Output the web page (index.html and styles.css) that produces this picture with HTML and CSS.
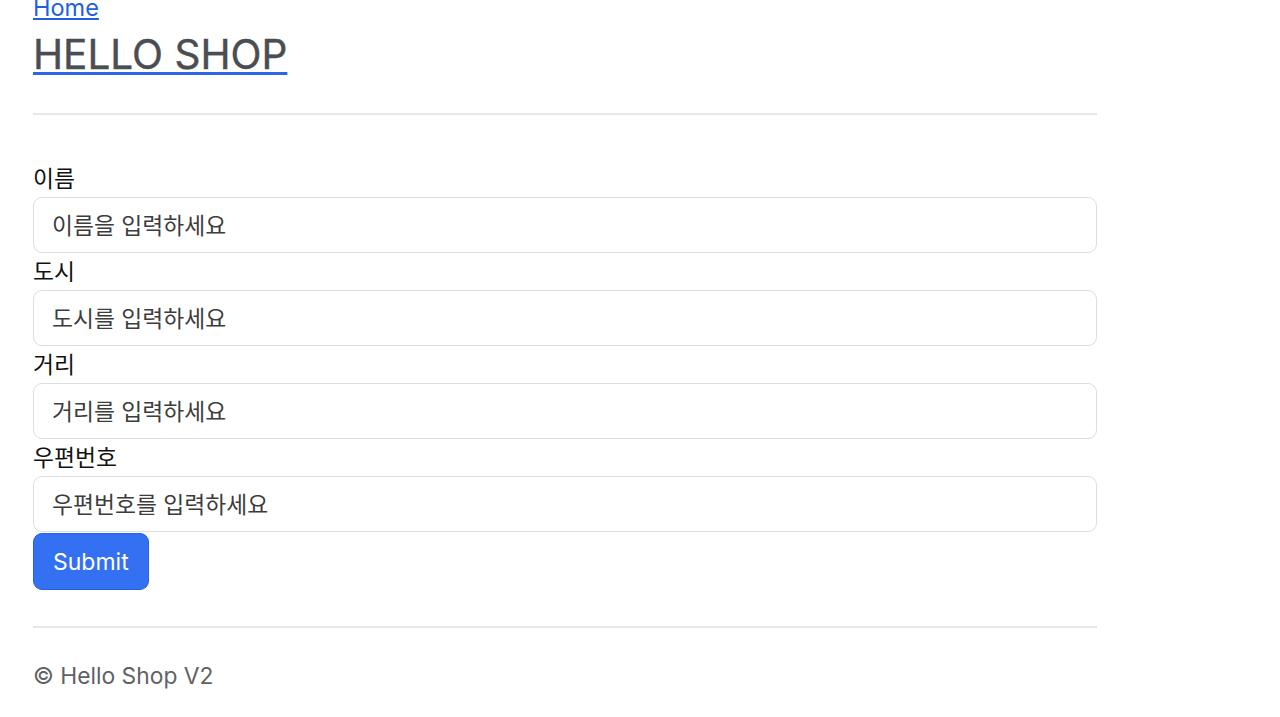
FILE: index.html
```html
<!DOCTYPE html>
<html lang="ko">
<head>
<meta charset="utf-8">
<title>HELLO SHOP</title>
<link rel="stylesheet" href="styles.css">
</head>
<body>
<div class="container">
  <header class="header">
    <a class="home" href="#">Home</a>
    <h1 class="title"><a href="#">HELLO SHOP</a></h1>
  </header>
  <hr class="rule rule-top">
  <form class="form">
    <label class="label" for="name">이름</label>
    <input class="input" id="name" type="text" placeholder="이름을 입력하세요">
    <label class="label" for="city">도시</label>
    <input class="input" id="city" type="text" placeholder="도시를 입력하세요">
    <label class="label" for="street">거리</label>
    <input class="input" id="street" type="text" placeholder="거리를 입력하세요">
    <label class="label" for="zip">우편번호</label>
    <input class="input" id="zip" type="text" placeholder="우편번호를 입력하세요">
    <button class="btn" type="submit">Submit</button>
  </form>
  <hr class="rule rule-bottom">
  <footer class="footer">© Hello Shop V2</footer>
</div>
</body>
</html>
```

FILE: styles.css
```css
* { box-sizing: border-box; }
html, body { margin: 0; padding: 0; background: #fff; }
body {
  font-family: "Inter", "Noto Sans CJK KR", sans-serif;
  font-size: 24px;
  color: #212529;
}
.container {
  width: 1097px;
  padding-left: 33px;
  margin-top: -10px;
}
.header { display: flex; flex-direction: column; align-items: flex-start; }
.home {
  font-size: 23.5px;
  line-height: 36px;
  color: #1f5fe0;
  text-decoration: underline;
  text-underline-offset: 2px;
}
.title {
  margin: 0;
  font-size: 40.5px;
  font-weight: 400;
  line-height: 57px;
}
.title a {
  color: #4a4d51;
  text-decoration: underline;
  text-decoration-color: #2a66e6;
  text-decoration-thickness: 3px;
  text-underline-offset: 3px;
  -webkit-text-stroke: 0.4px #4a4d51;
}
.rule {
  border: 0;
  border-top: 2px solid #e6e7e8;
  margin: 0;
}
.rule-top { margin-top: 30px; }
.form {
  display: flex;
  flex-direction: column;
  align-items: flex-start;
  margin-top: 45px;
}
.label {
  display: block;
  font-size: 22.8px;
  line-height: 37px;
  color: #111;
}
.input {
  display: block;
  width: 100%;
  height: 56px;
  padding: 9px 18px;
  font-family: inherit;
  font-size: 22.8px;
  line-height: 36px;
  border: 1.5px solid #dcdee2;
  border-radius: 9px;
  color: #333;
  background: #fff;
}
.input::placeholder { color: #3c3c3c; opacity: 1; }
.btn {
  margin-top: 1px;
  height: 57px;
  padding: 0 19px;
  font-family: inherit;
  font-size: 23px;
  line-height: 36px;
  color: #fff;
  background: #3370f2;
  border: 1px solid #2760e0;
  border-radius: 9px;
}
.rule-bottom { margin-top: 36px; }
.footer {
  padding-top: 30px;
  font-size: 22.8px;
  line-height: 36px;
  color: #5f6266;
}
```
